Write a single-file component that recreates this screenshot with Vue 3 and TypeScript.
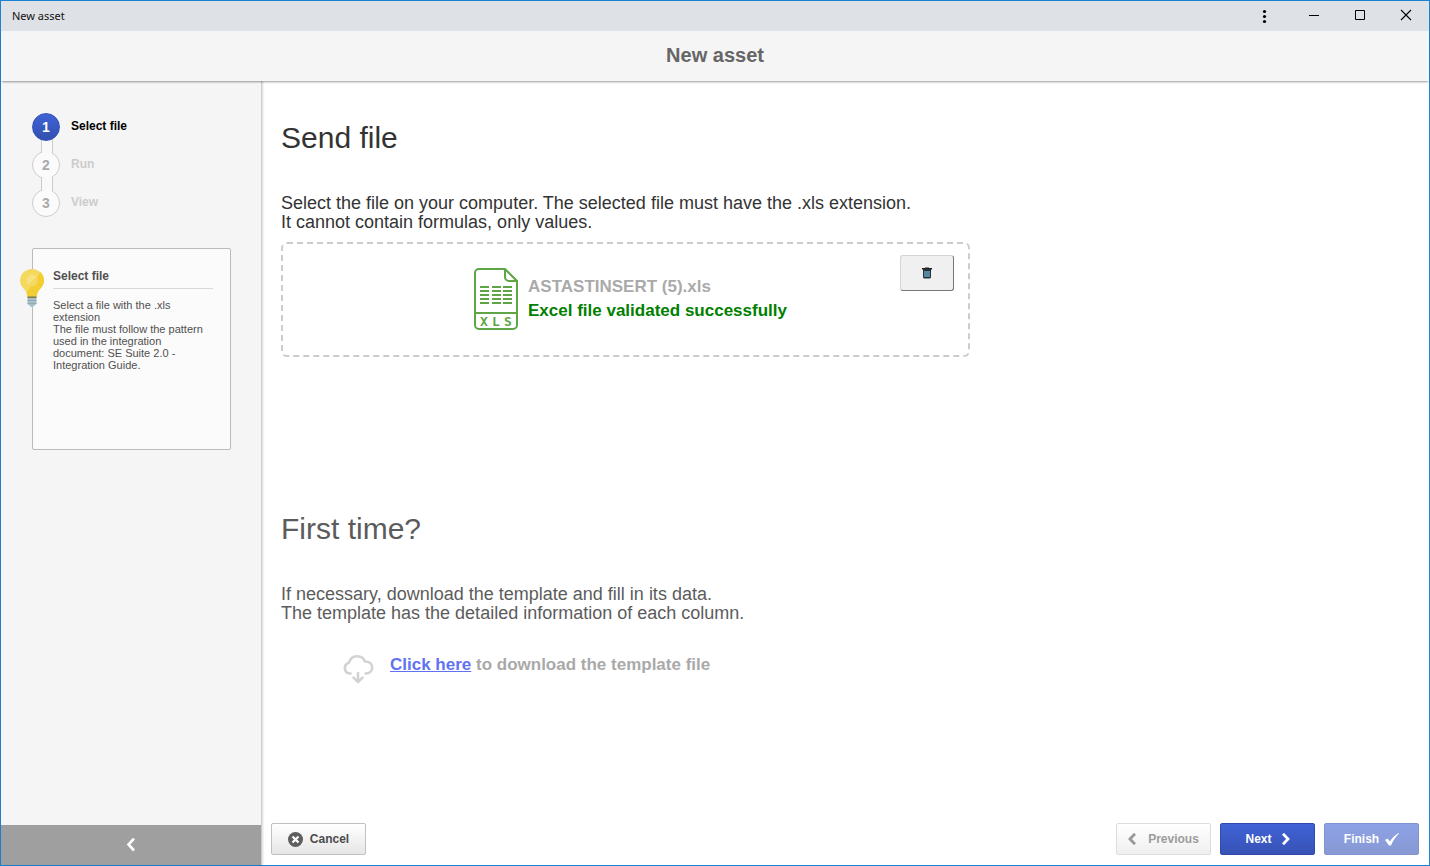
<script setup lang="ts">
import { ref } from 'vue'

interface Step {
  id: number
  label: string
}

const steps: Step[] = [
  { id: 1, label: 'Select file' },
  { id: 2, label: 'Run' },
  { id: 3, label: 'View' },
]
const current = ref<number>(1)
const fileName = ref<string>('ASTASTINSERT (5).xls')
</script>

<template>
  <div class="window">
    <div class="titlebar">
      <span class="caption">New asset</span>
      <div class="controls">
        <button type="button" class="control menu" aria-label="Menu">
          <svg width="16" height="16" viewBox="0 0 16 16"><circle cx="8.5" cy="3.500" r="1.600" /><circle cx="8.5" cy="8.500" r="1.600" /><circle cx="8.5" cy="13.500" r="1.600" /></svg>
        </button>
        <button type="button" class="control" aria-label="Minimize">
          <svg width="16" height="16" viewBox="0 0 16 16"><path d="M3 7h10v1H3z" /></svg>
        </button>
        <button type="button" class="control" aria-label="Maximize">
          <svg width="16" height="16" viewBox="0 0 16 16"><path d="M3.500 2.500h9v9h-9z" fill="none" stroke="#000" /></svg>
        </button>
        <button type="button" class="control" aria-label="Close">
          <svg width="16" height="16" viewBox="0 0 16 16"><path d="M3 2l10 10M13 2L3 12" stroke="#000" stroke-width="1.100" /></svg>
        </button>
      </div>
    </div>

    <header class="header"><h1>New asset</h1></header>

    <div class="body">
      <aside class="sidebar">
        <div class="sidebar-content">
          <ol class="steps">
            <li v-for="step in steps" :key="step.id" class="step" :class="{ active: step.id === current }">
              <span class="bubble">{{ step.id }}</span>
              <span class="step-label">{{ step.label }}</span>
            </li>
          </ol>

          <section class="tip">
            <svg class="bulb" width="24" height="40" viewBox="0 0 24 40" aria-hidden="true">
              <path d="M12 1C5.400 1 0 6 0 12.500c0 4 2 6.500 4.200 8.700C6.500 23.600 7 26 7.500 29h9c.5-3 1-5.400 3.300-7.800C22 19 24 16.500 24 12.500 24 6 18.600 1 12 1z" fill="#f5d95f" />
              <path d="M20.500 4.300C22.700 6.300 24 9.200 24 12.500c0 4-2 6.500-4.200 8.700C17.500 23.600 17 26 16.500 29h-9L6.700 24.500z" fill="#f2cd33" />
              <circle cx="12" cy="12.500" r="6" fill="#f4d860" />
              <path d="M8.300 17.200L16.300 8.300A6 6 0 0 0 8.300 17.200z" fill="#f7e182" />
              <path d="M7.500 28.500h9V36L12 39.500 7.500 36z" fill="#a9bfc7" />
              <path d="M7.500 28.500h9V30h-9z" fill="#8a7c38" />
              <path d="M7.500 32h9v1h-9zM7.500 35h9v1h-9z" fill="#93abb4" />
            </svg>
            <h2>Select file</h2>
            <p>Select a file with the .xls extension<br />The file must follow the pattern used in the integration document: SE Suite 2.0 - Integration Guide.</p>
          </section>
        </div>
        <button type="button" class="collapse" aria-label="Collapse">
          <svg width="10" height="14" viewBox="0 0 10 14"><path d="M8 .5L2.500 6.500 8 12.500" fill="none" stroke="#fff" stroke-width="2.600" /></svg>
        </button>
      </aside>

      <main class="main">
        <div class="content">
          <section>
            <h2 class="heading">Send file</h2>
            <p class="text">Select the file on your computer. The selected file must have the .xls extension.<br />It cannot contain formulas, only values.</p>
            <div class="dropzone">
              <div class="file">
                <svg width="44" height="62" viewBox="0 0 44 62" fill="none" stroke="#5ea645" stroke-width="2" aria-hidden="true">
                  <path d="M31 1H5a4 4 0 0 0-4 4v52a4 4 0 0 0 4 4h34a4 4 0 0 0 4-4V13zM31 1v8a4 4 0 0 0 4 4h8M1 45h42" />
                  <path d="M6 19h9M18 19h9M29 19h9M6 23h9M18 23h9M29 23h9M6 27h9M18 27h9M29 27h9M6 31h9M18 31h9M29 31h9M6 35h9M18 35h9M29 35h9" />
                  <text x="6 18 30" y="58" class="file-type">XLS</text>
                </svg>
                <div class="file-info">
                  <div class="file-name">{{ fileName }}</div>
                  <div class="file-status">Excel file validated successfully</div>
                </div>
              </div>
              <button type="button" class="remove" aria-label="Remove file">
                <svg width="10" height="12" viewBox="0 0 10 12"><path d="M3 .5h4V1h3v1.500H0V1h3z" fill="#222" /><path d="M1 2h8v8a1.500 1.500 0 0 1-1.500 1.500h-5A1.500 1.500 0 0 1 1 10z" fill="#263238" /><path d="M3 4v6M5 4v6M7 4v6" stroke="#78bfe8" stroke-width="1.200" /></svg>
              </button>
            </div>
          </section>

          <section class="first-time">
            <h2 class="heading">First time?</h2>
            <p class="text">If necessary, download the template and fill in its data.<br />The template has the detailed information of each column.</p>
            <div class="download">
              <svg width="31" height="30" viewBox="0 0 31 30" fill="none" stroke="#c8c8c8" stroke-width="2.600" stroke-linecap="round" stroke-linejoin="round" aria-hidden="true">
                <path d="M7.500 18.500H7A5.500 5.500 0 0 1 6 7.700C7.200 3.700 10.200 1.300 14.200 1.300c3.700 0 6.500 1.900 7.800 5.200 4.200 0 7.200 2.300 7.200 6 0 3.500-2.700 6-6.500 6M15 18v9M10.500 22.700L15 27.200l4.500-4.500" />
              </svg>
              <p><a href="#template">Click here</a> to download the template file</p>
            </div>
          </section>
        </div>

        <footer class="actions">
          <button type="button" class="btn">
            <svg width="15" height="15" viewBox="0 0 15 15"><circle cx="7.500" cy="7.500" r="7.500" fill="#5e5e5e" /><path d="M4.500 4.500l6 6M10.500 4.500l-6 6" stroke="#fff" stroke-width="2.200" /></svg>
            Cancel
          </button>
          <div class="nav">
            <button type="button" class="btn previous" disabled>
              <svg width="8" height="12" viewBox="0 0 8 12"><path d="M7 .8L2 6l5 5.200" fill="none" stroke="#999" stroke-width="2.800" /></svg>
              Previous
            </button>
            <button type="button" class="btn primary">
              Next
              <svg width="8" height="12" viewBox="0 0 8 12"><path d="M1 .8L6 6l-5 5.200" fill="none" stroke="#fff" stroke-width="2.800" /></svg>
            </button>
            <button type="button" class="btn primary finish" disabled>
              Finish
              <svg width="14" height="13" viewBox="0 0 14 13"><path d="M0 7l2.500-1.500L5 8.500C7 5 10 2 13.500 0L14 .5C10.500 4 8 7.500 6 12.500H4z" fill="#fff" /></svg>
            </button>
          </div>
        </footer>
      </main>
    </div>
  </div>
</template>

<style>
body {
  margin: 0;
}
</style>

<style scoped>
.window,
.window * {
  box-sizing: border-box;
}
.window {
  display: flex;
  flex-direction: column;
  min-height: 100vh;
  border: 1px solid #1a82d2;
  background: #fff;
  color: #333;
  font-family: "Liberation Sans", Arial, sans-serif;
}
h1,
h2,
p,
ol {
  margin: 0;
  padding: 0;
}
button {
  font-family: inherit;
  cursor: pointer;
}
svg {
  display: block;
  flex: none;
}
.titlebar {
  display: flex;
  align-items: center;
  justify-content: space-between;
  height: 30px;
  padding-left: 11px;
  background: #dee1e6;
  color: #111;
  font: 11px/16px "Noto Sans", "Open Sans", sans-serif;
}
.controls {
  display: flex;
}
.control {
  display: flex;
  align-items: center;
  justify-content: center;
  width: 46px;
  height: 30px;
  padding: 0;
  border: 0;
  background: none;
}
.menu {
  width: 54px;
}
.header {
  position: relative;
  padding: 12px 0 14px;
  background: #f5f5f5;
  box-shadow: 0 2px 2px -1px rgba(0, 0, 0, 0.4);
  text-align: center;
}
.header h1 {
  color: #666;
  font-size: 20px;
  line-height: 24px;
}
.body {
  display: flex;
  flex: 1;
}
.sidebar {
  display: flex;
  flex: none;
  flex-direction: column;
  width: 261px;
  border-right: 1px solid #ccc;
  background: #f5f5f5;
  box-shadow: 1px 0 2px rgba(0, 0, 0, 0.15);
}
.sidebar-content {
  flex: 1;
  padding: 32px 30px 30px 31px;
}
.steps {
  list-style: none;
}
.step {
  display: flex;
  align-items: center;
  gap: 11px;
  color: #ccc;
  font-size: 12px;
  font-weight: bold;
  line-height: 16px;
}
.step-label {
  padding-bottom: 2px;
}
.step + .step {
  position: relative;
  margin-top: 10px;
}
.step + .step::before {
  content: "";
  position: absolute;
  top: -12px;
  left: 9px;
  z-index: 1;
  width: 10px;
  height: 14px;
  border: solid #ccc;
  border-width: 0 1px;
  background: #f9f9f9;
}
.bubble {
  display: flex;
  align-items: center;
  justify-content: center;
  width: 28px;
  height: 28px;
  border: 1px solid #ccc;
  border-radius: 50%;
  background: #fbfbfb;
  color: #aaa;
  font-size: 14px;
}
.active {
  position: relative;
  z-index: 2;
  color: #000;
}
.active .bubble {
  border-color: #3454b8;
  background: linear-gradient(#3f62d6, #3350ae);
  color: #fff;
}
.tip {
  position: relative;
  min-height: 202px;
  margin-top: 31px;
  padding: 19px 17px 19px 20px;
  border: 1px solid #bbb;
  border-radius: 2px;
  background: #fbfbfb;
  color: #505050;
}
.bulb {
  position: absolute;
  top: 19px;
  left: -13px;
}
.tip h2 {
  padding-bottom: 4px;
  border-bottom: 1px solid #d8d8d8;
  font-size: 12px;
  line-height: 16px;
}
.tip p {
  margin-top: 10px;
  font-size: 11px;
  line-height: 12px;
}
.collapse {
  display: flex;
  align-items: center;
  justify-content: center;
  height: 40px;
  padding: 0;
  border: 0;
  background: #9f9f9f;
}
.main {
  display: flex;
  flex: 1;
  flex-direction: column;
  min-width: 0;
}
.content {
  flex: 1;
  padding: 40px 19px 20px;
}
.heading {
  font-size: 30px;
  font-weight: normal;
  line-height: 34px;
}
.text {
  margin-top: 39px;
  font-size: 18px;
  line-height: 19px;
}
.dropzone {
  display: grid;
  grid-template-columns: 1fr auto 1fr;
  max-width: 689px;
  min-height: 115px;
  margin-top: 10px;
  padding: 11px 14px 11px 24px;
  border: 2px dashed #ccc;
  border-radius: 6px;
}
.file {
  display: flex;
  grid-column: 2;
  gap: 10px;
  padding-top: 13px;
}
.file-type {
  fill: #5ea645;
  stroke: none;
  font-family: "DejaVu Sans Mono", monospace;
  font-size: 13px;
  font-weight: bold;
}
.file-info {
  padding-top: 7px;
  font-size: 17px;
  font-weight: bold;
  line-height: 24px;
}
.file-name {
  color: #aaa;
}
.file-status {
  color: #008000;
}
.remove {
  display: flex;
  align-items: center;
  justify-content: center;
  justify-self: end;
  width: 54px;
  height: 36px;
  padding: 0;
  border: 1px solid;
  border-color: #d4d4d4 #777 #777 #d4d4d4;
  border-radius: 3px;
  background: #f0f0f0;
}
.first-time {
  margin-top: 155px;
  opacity: 0.8;
}
.download {
  display: flex;
  gap: 16px;
  margin-top: 32px;
  padding-left: 62px;
  color: #949494;
  font-size: 17px;
  font-weight: bold;
  line-height: 20px;
}
.download a {
  color: #3850f0;
}
.actions {
  display: flex;
  justify-content: space-between;
  padding: 0 10px 10px 9px;
}
.nav {
  display: flex;
  gap: 9px;
}
.btn {
  display: flex;
  align-items: center;
  justify-content: center;
  gap: 7px;
  width: 95px;
  height: 32px;
  padding: 0;
  border: 1px solid #c0c0c0;
  border-radius: 2px;
  background: linear-gradient(#fff, #e6e6e6);
  color: #4c4c4c;
  font-size: 12px;
  font-weight: bold;
}
.previous {
  gap: 12px;
  border-color: #ddd;
  background: linear-gradient(#fff, #f0f0f0);
  color: #9c9c9c;
}
.primary {
  gap: 10px;
  border-color: #2f4bab;
  background: linear-gradient(#3f62d6, #3852b5);
  color: #fff;
}
.finish {
  gap: 6px;
  border-color: #8294d0;
  background: linear-gradient(#8ca1e6, #8899d3);
}
</style>
